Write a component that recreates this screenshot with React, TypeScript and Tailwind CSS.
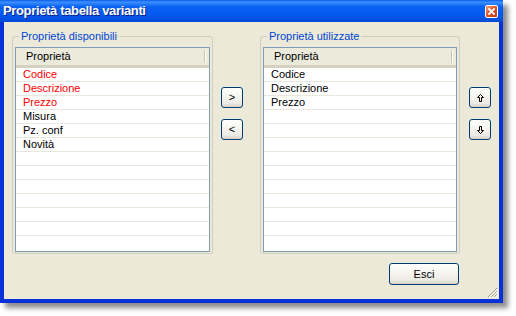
const FONT = { fontFamily: '"Liberation Sans", Arial, sans-serif' }

const LEFT_ITEMS = [
  { label: 'Codice', red: true },
  { label: 'Descrizione', red: true },
  { label: 'Prezzo', red: true },
  { label: 'Misura', red: false },
  { label: 'Pz. conf', red: false },
  { label: 'Novità', red: false },
]

const RIGHT_ITEMS = [
  { label: 'Codice', red: false },
  { label: 'Descrizione', red: false },
  { label: 'Prezzo', red: false },
]

const ROW_COUNT = 12

function XpButton({ children, className = '' }: { children: React.ReactNode; className?: string }) {
  return (
    <button
      className={`flex items-center justify-center rounded-[3px] border border-[#003C74] bg-[linear-gradient(to_bottom,#FFFFFF_0%,#F4F3EE_50%,#ECEBE6_80%,#D6D0C5_100%)] text-[11px] leading-none text-black ${className}`}
    >
      {children}
    </button>
  )
}

function ListView({ items }: { items: { label: string; red: boolean }[] }) {
  const rows = Array.from({ length: ROW_COUNT }, (_, i) => items[i])
  return (
    <div className="h-[205px] overflow-hidden border border-[#7F9DB9] bg-white">
      <div className="relative flex h-[20px] items-center border-b-[3px] border-[#D6D2C2] bg-[#EBEADB] pl-[10px] text-[11px] text-black">
        <span className="-mt-[1px]">Proprietà</span>
        <div className="ml-auto mr-[3px] flex h-[13px]">
          <div className="w-px bg-[#C7C5B2]" />
          <div className="w-px bg-white" />
        </div>
      </div>
      {rows.map((item, i) => (
        <div
          key={i}
          className={`flex h-[14px] items-center border-b border-[#EAE8DD] pl-[7px] text-[11px] leading-[13px] ${item?.red ? 'text-[#FF0000]' : 'text-black'}`}
        >
          {item?.label ?? ''}
        </div>
      ))}
    </div>
  )
}

function Group({ title, items, width }: { title: string; items: { label: string; red: boolean }[]; width: string }) {
  return (
    <fieldset className={`${width} rounded-[3px] border border-[#D0D0BF] px-[2px] pt-[4px] pb-[1px]`}>
      <legend className="ml-[4px] pl-[2px] pr-[1px] text-[11px] leading-[13px] text-[#0046D5]">{title}</legend>
      <ListView items={items} />
    </fieldset>
  )
}

function ArrowUp() {
  return (
    <svg width="7" height="8" viewBox="0 0 7 8">
      <path d="M3.5 0.5 L6.5 3.5 H4.5 V7.5 H2.5 V3.5 H0.5 Z" fill="none" stroke="#000" strokeWidth="1" />
    </svg>
  )
}

function ArrowDown() {
  return (
    <svg width="7" height="8" viewBox="0 0 7 8">
      <path d="M3.5 7.5 L6.5 4.5 H4.5 V0.5 H2.5 V4.5 H0.5 Z" fill="none" stroke="#000" strokeWidth="1" />
    </svg>
  )
}

export default function App() {
  return (
    <div className="min-h-[316px] w-[516px] bg-white" style={FONT}>
      <div className="flex h-[303px] w-[503px] flex-col shadow-[5px_5px_5px_rgba(0,0,0,0.45)]">
        {/* title bar */}
        <div className="flex h-[22px] items-center bg-[linear-gradient(to_bottom,#0A5FE8_0%,#3D8FFF_10%,#0A62F2_30%,#0058EE_70%,#0049D6_100%)] pl-[3px] pr-[5px]">
          <span className="text-[13px] font-bold tracking-[-0.35px] text-white [text-shadow:1px_1px_0_#0A1E8C]">
            Proprietà tabella varianti
          </span>
          <div className="ml-auto flex h-[13px] w-[13px] items-center justify-center rounded-[2px] border border-white bg-[linear-gradient(135deg,#F0A080_0%,#E2562A_45%,#C33A12_100%)]">
            <svg width="7" height="7" viewBox="0 0 7 7">
              <path d="M1 1 L6 6 M6 1 L1 6" stroke="#fff" strokeWidth="1.8" strokeLinecap="square" />
            </svg>
          </div>
        </div>

        {/* body */}
        <div className="relative flex flex-1 flex-col border-x-4 border-b-4 border-[#0831D9] bg-[#ECE9D8] pl-[8px] pt-[8px]">
          <div className="flex items-start">
            <Group title="Proprietà disponibili" items={LEFT_ITEMS} width="w-[201px]" />
            <div className="ml-[8px] mt-[57px] flex flex-col gap-[11px]">
              <XpButton className="h-[21px] w-[22px]">&gt;</XpButton>
              <XpButton className="h-[21px] w-[22px]">&lt;</XpButton>
            </div>
            <div className="ml-[17px]">
              <Group title="Proprietà utilizzate" items={RIGHT_ITEMS} width="w-[200px]" />
            </div>
            <div className="ml-[9px] mt-[57px] flex flex-col gap-[11px]">
              <XpButton className="h-[21px] w-[22px]">
                <ArrowUp />
              </XpButton>
              <XpButton className="h-[21px] w-[22px]">
                <ArrowDown />
              </XpButton>
            </div>
          </div>
          <div className="mt-[9px] flex justify-end pr-[40px]">
            <XpButton className="h-[22px] w-[70px]">Esci</XpButton>
          </div>

          {/* resize grip */}
          <svg className="absolute bottom-[1px] right-[1px]" width="12" height="12" viewBox="0 0 12 12">
            <path d="M11 2 L2 11 M11 5 L5 11 M11 8 L8 11" stroke="#A29F8C" strokeWidth="1" />
            <path d="M12 3 L3 12 M12 6 L6 12 M12 9 L9 12" stroke="#FFFFFF" strokeWidth="1" />
          </svg>
        </div>
      </div>
    </div>
  )
}
